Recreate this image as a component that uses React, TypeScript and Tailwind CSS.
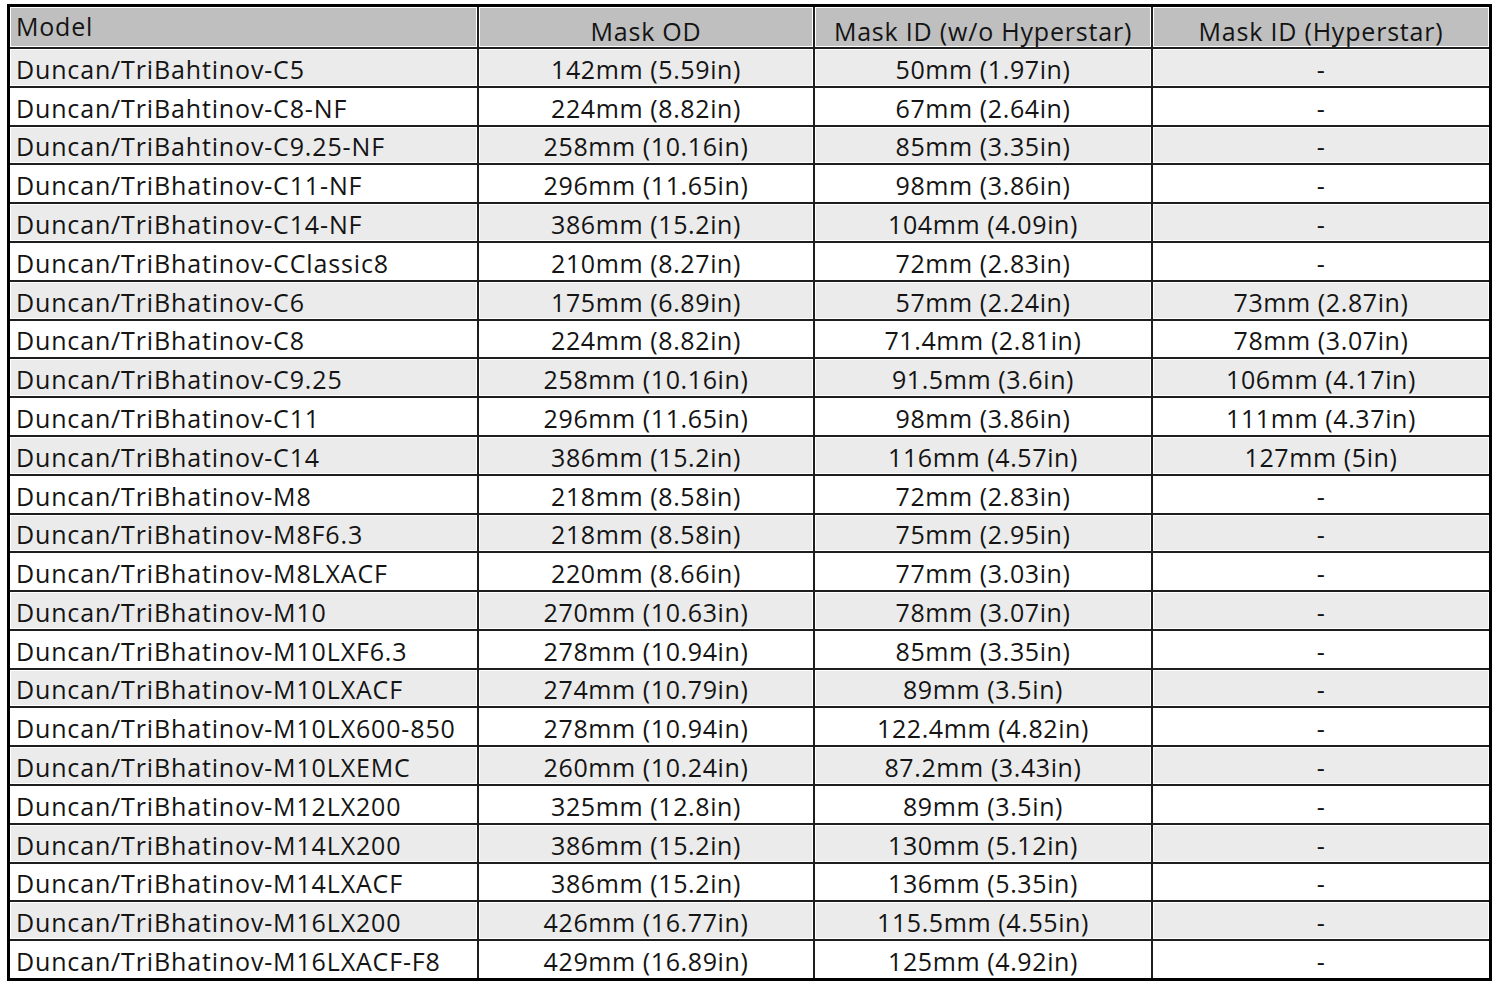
import React from "react";

type Row = [string, string, string, string];

const rows: Row[] = [
  ["Duncan/TriBahtinov-C5", "142mm (5.59in)", "50mm (1.97in)", "-"],
  ["Duncan/TriBahtinov-C8-NF", "224mm (8.82in)", "67mm (2.64in)", "-"],
  ["Duncan/TriBahtinov-C9.25-NF", "258mm (10.16in)", "85mm (3.35in)", "-"],
  ["Duncan/TriBhatinov-C11-NF", "296mm (11.65in)", "98mm (3.86in)", "-"],
  ["Duncan/TriBhatinov-C14-NF", "386mm (15.2in)", "104mm (4.09in)", "-"],
  ["Duncan/TriBhatinov-CClassic8", "210mm (8.27in)", "72mm (2.83in)", "-"],
  ["Duncan/TriBhatinov-C6", "175mm (6.89in)", "57mm (2.24in)", "73mm (2.87in)"],
  ["Duncan/TriBhatinov-C8", "224mm (8.82in)", "71.4mm (2.81in)", "78mm (3.07in)"],
  ["Duncan/TriBhatinov-C9.25", "258mm (10.16in)", "91.5mm (3.6in)", "106mm (4.17in)"],
  ["Duncan/TriBhatinov-C11", "296mm (11.65in)", "98mm (3.86in)", "111mm (4.37in)"],
  ["Duncan/TriBhatinov-C14", "386mm (15.2in)", "116mm (4.57in)", "127mm (5in)"],
  ["Duncan/TriBhatinov-M8", "218mm (8.58in)", "72mm (2.83in)", "-"],
  ["Duncan/TriBhatinov-M8F6.3", "218mm (8.58in)", "75mm (2.95in)", "-"],
  ["Duncan/TriBhatinov-M8LXACF", "220mm (8.66in)", "77mm (3.03in)", "-"],
  ["Duncan/TriBhatinov-M10", "270mm (10.63in)", "78mm (3.07in)", "-"],
  ["Duncan/TriBhatinov-M10LXF6.3", "278mm (10.94in)", "85mm (3.35in)", "-"],
  ["Duncan/TriBhatinov-M10LXACF", "274mm (10.79in)", "89mm (3.5in)", "-"],
  ["Duncan/TriBhatinov-M10LX600-850", "278mm (10.94in)", "122.4mm (4.82in)", "-"],
  ["Duncan/TriBhatinov-M10LXEMC", "260mm (10.24in)", "87.2mm (3.43in)", "-"],
  ["Duncan/TriBhatinov-M12LX200", "325mm (12.8in)", "89mm (3.5in)", "-"],
  ["Duncan/TriBhatinov-M14LX200", "386mm (15.2in)", "130mm (5.12in)", "-"],
  ["Duncan/TriBhatinov-M14LXACF", "386mm (15.2in)", "136mm (5.35in)", "-"],
  ["Duncan/TriBhatinov-M16LX200", "426mm (16.77in)", "115.5mm (4.55in)", "-"],
  ["Duncan/TriBhatinov-M16LXACF-F8", "429mm (16.89in)", "125mm (4.92in)", "-"],
];

const headers = ["Mask OD", "Mask ID (w/o Hyperstar)", "Mask ID (Hyperstar)"];

export default function App() {
  return (
    <div className="min-h-screen bg-white pl-[7px] pt-[4px] font-['Open_Sans',sans-serif] text-[25px] font-medium tracking-[0.45px] text-[#141414]">
      <div className="grid h-[977px] w-[1485px] grid-cols-[467px_334px_336px_336px] grid-rows-[40px_repeat(24,minmax(0,1fr))] gap-[2px] border-[3px] border-black bg-[#1e1e1e]">
        {/* header */}
        <div className="flex items-start bg-[#bfbfbf] pl-[6px] pt-[4px] leading-[30px] tracking-[0.8px] shadow-[inset_0_0_0_1px_#fff]">
          Model
        </div>
        {headers.map((h) => (
          <div
            key={h}
            className="flex items-end justify-center bg-[#bfbfbf] pb-[1px] leading-[30px] tracking-[0.8px] shadow-[inset_0_0_0_1px_#fff]"
          >
            {h}
          </div>
        ))}

        {rows.map((row, i) => {
          const bg = i % 2 === 0 ? "bg-[#ebebeb]" : "bg-white";
          return (
            <React.Fragment key={row[0]}>
              <div
                className={`flex items-end pl-[6px] pb-[2px] leading-[30px] tracking-[0.85px] whitespace-nowrap shadow-[inset_0_0_0_1px_#fff] ${bg}`}
              >
                {row[0]}
              </div>
              {row.slice(1).map((cell, j) => (
                <div
                  key={j}
                  className={`flex items-end justify-center pb-[2px] leading-[30px] tracking-[0.6px] whitespace-nowrap shadow-[inset_0_0_0_1px_#fff] ${bg}`}
                >
                  {cell}
                </div>
              ))}
            </React.Fragment>
          );
        })}
      </div>
    </div>
  );
}
